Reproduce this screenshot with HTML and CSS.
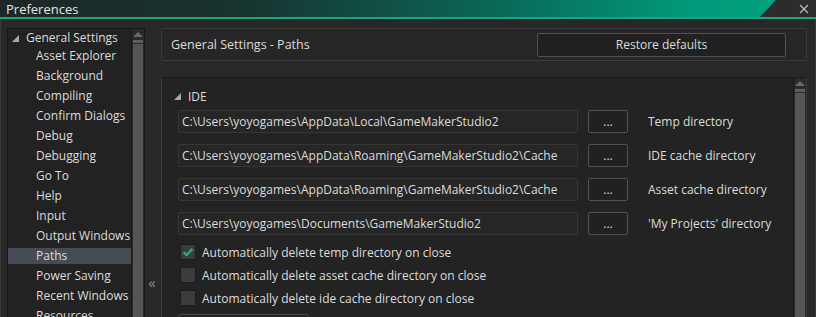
FILE: index.html
```html
<!DOCTYPE html>
<html lang="en">
<head>
    <meta charset="UTF-8">
    <title>Preferences</title>
    <link rel="stylesheet" href="styles.css">
</head>
<body>
    <div class="titlebar">
        <div class="title-fill"><span class="title">Preferences</span></div>
        <div class="title-close">
            <svg width="10" height="10" viewBox="0 0 10 10"><path d="M1 1 L9 9 M9 1 L1 9" stroke="#b8b8b8" stroke-width="1.3"/></svg>
        </div>
    </div>
    <div class="window">
        <div class="tree">
            <div class="tree-list">
                <div class="tree-group"><span class="arrow"></span>General Settings</div>
                <div class="tree-item">Asset Explorer</div>
                <div class="tree-item">Background</div>
                <div class="tree-item">Compiling</div>
                <div class="tree-item">Confirm Dialogs</div>
                <div class="tree-item">Debug</div>
                <div class="tree-item">Debugging</div>
                <div class="tree-item">Go To</div>
                <div class="tree-item">Help</div>
                <div class="tree-item">Input</div>
                <div class="tree-item">Output Windows</div>
                <div class="tree-item selected">Paths</div>
                <div class="tree-item">Power Saving</div>
                <div class="tree-item">Recent Windows</div>
                <div class="tree-item">Resources</div>
            </div>
            <div class="scrollbar">
                <div class="scroll-up"></div>
                <div class="scroll-thumb"></div>
            </div>
        </div>
        <div class="splitter"><span class="collapse">&laquo;</span></div>
        <div class="content">
            <div class="header">
                <span class="header-title">General Settings - Paths</span>
                <button class="btn restore">Restore defaults</button>
            </div>
            <div class="panel">
                <div class="panel-body">
                    <div class="section"><span class="arrow"></span>IDE</div>
                    <div class="path-row">
                        <div class="path-input">C:\Users\yoyogames\AppData\Local\GameMakerStudio2</div>
                        <button class="btn browse">...</button>
                        <span class="path-label">Temp directory</span>
                    </div>
                    <div class="path-row">
                        <div class="path-input">C:\Users\yoyogames\AppData\Roaming\GameMakerStudio2\Cache</div>
                        <button class="btn browse">...</button>
                        <span class="path-label">IDE cache directory</span>
                    </div>
                    <div class="path-row">
                        <div class="path-input">C:\Users\yoyogames\AppData\Roaming\GameMakerStudio2\Cache</div>
                        <button class="btn browse">...</button>
                        <span class="path-label">Asset cache directory</span>
                    </div>
                    <div class="path-row">
                        <div class="path-input">C:\Users\yoyogames\Documents\GameMakerStudio2</div>
                        <button class="btn browse">...</button>
                        <span class="path-label">'My Projects' directory</span>
                    </div>
                    <div class="checks">
                        <label class="check-row">
                            <span class="checkbox checked">
                                <svg width="12" height="10" viewBox="0 0 12 10"><path d="M1.5 5.2 L4.6 8 L10.5 1.8" fill="none" stroke="#1fae72" stroke-width="2.4"/></svg>
                            </span>
                            Automatically delete temp directory on close
                        </label>
                        <label class="check-row">
                            <span class="checkbox"></span>
                            Automatically delete asset cache directory on close
                        </label>
                        <label class="check-row">
                            <span class="checkbox"></span>
                            Automatically delete ide cache directory on close
                        </label>
                    </div>
                    <div class="more-btn"></div>
                </div>
                <div class="scrollbar panel-scroll">
                    <div class="scroll-up"></div>
                    <div class="scroll-thumb"></div>
                </div>
            </div>
        </div>
    </div>
</body>
</html>
```

FILE: styles.css
```css
body {
    margin: 0;
    width: 816px;
    height: 317px;
    overflow: hidden;
    background: #282828;
    font-family: 'Open Sans', 'Noto Sans', sans-serif;
    font-size: 12px;
    color: #dcdcdc;
}
.titlebar {
    display: flex;
    height: 17px;
    background: #2c2c2c;
    border-bottom: 2px solid #17a67d;
    position: relative;
}
.title-fill {
    flex: 1;
    background: linear-gradient(90deg, #1d2725 0%, #173430 30%, #0b6656 60%, #009a7b 85%, #00a381 100%);
    clip-path: polygon(0 0, 776px 0, 760px 100%, 0 100%);
    display: flex;
    align-items: center;
    padding-left: 6px;
}
.title {
    font-size: 13px;
    color: #e4e4e4;
}
.title-close {
    position: absolute;
    right: 7px;
    top: 4px;
    width: 10px;
    height: 10px;
}
.title-close svg { display: block; }
.window {
    display: flex;
    height: 298px;
    padding: 8px 8px 0 7px;
    border-top: 1px solid #1e1e1e;
    border-left: 1px solid #383838;
    border-right: 1px solid #383838;
    box-sizing: border-box;
}
.tree {
    flex: 0 0 138px;
    box-sizing: border-box;
    min-width: 0;
    overflow: hidden;
    display: flex;
    background: #222;
    border: 1px solid #171717;
    border-bottom: none;
    margin-left: -1px;
}
.tree-list {
    flex: 1;
    min-width: 0;
    padding-top: 1px;
}
.tree-group {
    height: 16px;
    line-height: 16px;
    padding-left: 18px;
    position: relative;
    white-space: nowrap;
}
.arrow {
    position: absolute;
    left: 4px;
    top: 5px;
    width: 0;
    height: 0;
    border-left: 7px solid transparent;
    border-bottom: 7px solid #a8a8a8;
}
.tree-item {
    height: 16px;
    line-height: 16px;
    margin-top: 4px;
    padding-left: 28px;
    white-space: nowrap;
}
.tree-group + .tree-item { margin-top: 2px; }
.tree-item.selected { background: #464c55; }
.scrollbar {
    flex: 0 0 12px;
    background: #2a2a2a;
    border-left: 1px solid #181818;
    display: flex;
    flex-direction: column;
    align-items: center;
}
.scroll-up {
    margin-top: 3px;
    width: 0;
    height: 0;
    border-left: 5px solid transparent;
    border-right: 5px solid transparent;
    border-bottom: 5px solid #6a6a6a;
}
.scroll-thumb {
    margin-top: 3px;
    width: 10px;
    flex: 1;
    background: #555;
    border-top: 3px solid #5e5e5e;
    box-shadow: inset 0 1px 0 #2a2a2a;
}
.splitter {
    flex: 0 0 16px;
    display: flex;
    align-items: flex-end;
    justify-content: center;
    padding: 0 2px 27px 0;
    box-sizing: border-box;
}
.collapse {
    color: #8a8a8a;
    font-size: 15px;
    line-height: 15px;
}
.content {
    flex: 1;
    min-width: 0;
    display: flex;
    flex-direction: column;
    gap: 16px;
}
.header {
    flex-shrink: 0;
    height: 33px;
    box-sizing: border-box;
    border: 1px solid #3a3a3a;
    border-radius: 2px;
    background: #262626;
    display: flex;
    align-items: center;
    justify-content: space-between;
    padding: 0 20px 0 9px;
}
.header-title { font-size: 12.5px; }
.btn {
    background: #212121;
    border: 1px solid #515151;
    border-radius: 2px;
    color: #dcdcdc;
    font-family: inherit;
    font-size: 12px;
    padding: 0;
}
.restore {
    width: 249px;
    height: 24px;
}
.panel {
    flex: 1;
    min-height: 0;
    overflow: hidden;
    display: flex;
    background: #232323;
    border: 1px solid #3a3a3a;
    border-top-color: #181818;
    border-bottom: none;
}
.panel-body {
    flex: 1;
    padding: 11px 0 0 16px;
}
.section {
    position: relative;
    height: 16px;
    line-height: 16px;
    padding-left: 10px;
    margin-bottom: 5px;
}
.section .arrow {
    left: -4px;
    top: 4px;
}
.path-row {
    display: flex;
    align-items: center;
    margin-bottom: 11px;
}
.path-input {
    width: 400px;
    height: 23px;
    line-height: 21px;
    box-sizing: border-box;
    border: 1px solid #363636;
    border-radius: 2px;
    background: #262626;
    padding-left: 3px;
    white-space: nowrap;
    overflow: hidden;
}
.browse {
    width: 40px;
    height: 23px;
    margin-left: 10px;
    line-height: 14px;
}
.path-label { margin-left: 20px; }
.checks {
    display: flex;
    flex-direction: column;
    gap: 7px;
    margin-top: -2px;
}
.check-row {
    display: flex;
    align-items: center;
    gap: 6px;
    height: 16px;
    padding-left: 2px;
}
.checkbox {
    width: 16px;
    height: 16px;
    box-sizing: border-box;
    border: 1px solid #1c1c1c;
    border-radius: 2px;
    background: #3c3c3c;
    display: flex;
    align-items: center;
    justify-content: center;
}
.more-btn {
    width: 129px;
    height: 20px;
    margin-top: 8px;
    border: 1px solid #4a4a4a;
    border-radius: 3px;
}
.panel-scroll {
    flex: 0 0 12px;
    border-left: 1px solid #181818;
}
```
